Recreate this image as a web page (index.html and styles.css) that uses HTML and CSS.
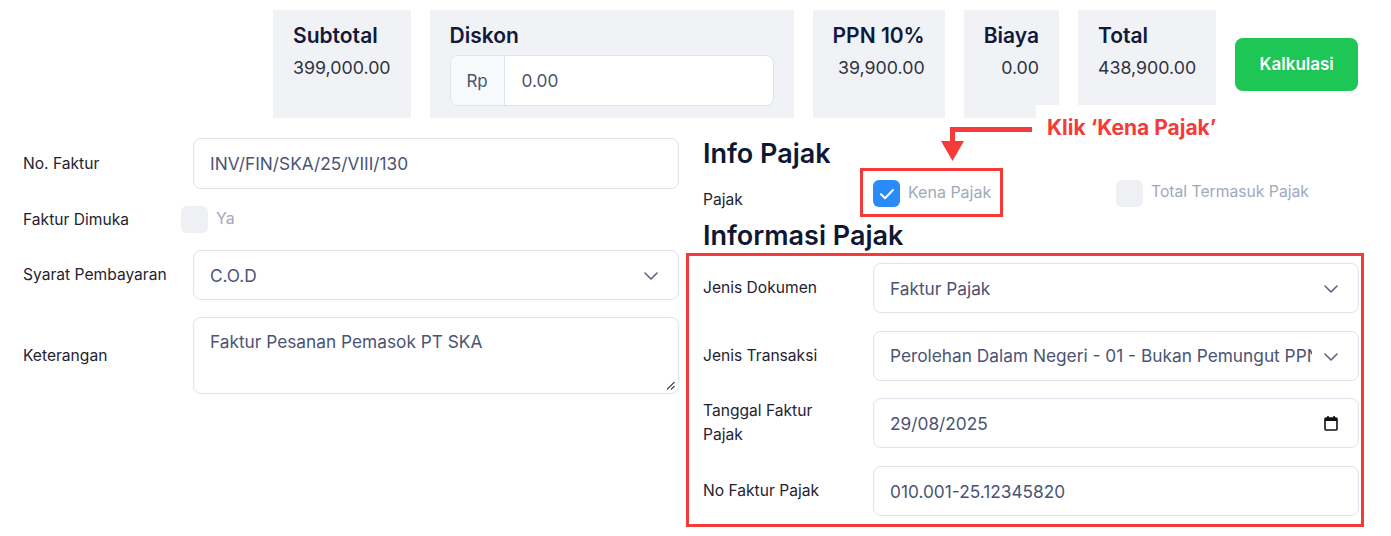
FILE: index.html
```html
<!DOCTYPE html>
<html lang="id">
<head>
<meta charset="utf-8">
<title>Faktur</title>
<link rel="stylesheet" href="styles.css">
</head>
<body>
<div class="page">
  <div class="summary">
    <div class="sbox">
      <div class="stitle">Subtotal</div>
      <div class="svalue">399,000.00</div>
    </div>
    <div class="sbox diskon">
      <div class="stitle">Diskon</div>
      <div class="igroup">
        <span class="addon">Rp</span>
        <span class="ivalue">0.00</span>
      </div>
    </div>
    <div class="sbox">
      <div class="stitle">PPN 10%</div>
      <div class="svalue">39,900.00</div>
    </div>
    <div class="sbox">
      <div class="stitle">Biaya</div>
      <div class="svalue">0.00</div>
    </div>
    <div class="sbox">
      <div class="stitle">Total</div>
      <div class="svalue">438,900.00</div>
    </div>
    <button class="btn-calc">Kalkulasi</button>
  </div>

  <div class="main">
    <div class="col">
      <div class="form">
        <div class="label">No. Faktur</div>
        <div class="field h51">INV/FIN/SKA/25/VIII/130</div>

        <div class="label">Faktur Dimuka</div>
        <div class="check-row shift">
          <span class="cbox"></span><span class="ctext">Ya</span>
        </div>

        <div class="label">Syarat Pembayaran</div>
        <div class="field select">
          <span class="ftext">C.O.D</span>
          <svg class="chev" width="14" height="8" viewBox="0 0 14 8"><path d="M1 1l6 6 6-6" fill="none" stroke="#5b6480" stroke-width="1.6" stroke-linecap="round" stroke-linejoin="round"/></svg>
        </div>

        <div class="label">Keterangan</div>
        <div class="field textarea">
          <span class="ftext">Faktur Pesanan Pemasok PT SKA</span>
          <svg class="grip" width="9" height="9" viewBox="0 0 9 9"><path d="M8.5 1L1 8.5M8.5 5L5 8.5" stroke="#444" stroke-width="1.1" fill="none"/></svg>
        </div>
      </div>
    </div>

    <div class="col">
      <h2 class="heading">Info Pajak</h2>
      <div class="pajak-row">
        <div class="label plabel">Pajak</div>
        <div class="pchecks">
          <div class="check-row">
            <span class="cbox checked"><svg width="16" height="12" viewBox="0 0 16 12"><path d="M2 6.3l4 4 8-8.3" fill="none" stroke="#fff" stroke-width="2" stroke-linecap="round" stroke-linejoin="round"/></svg></span>
            <span class="ctext">Kena Pajak</span>
          </div>
          <div class="check-row">
            <span class="cbox"></span><span class="ctext t2">Total Termasuk Pajak</span>
          </div>
        </div>
      </div>
      <h2 class="heading h2b">Informasi Pajak</h2>
      <div class="form tax">
        <div class="label">Jenis Dokumen</div>
        <div class="field select">
          <span class="ftext">Faktur Pajak</span>
          <svg class="chev" width="14" height="8" viewBox="0 0 14 8"><path d="M1 1l6 6 6-6" fill="none" stroke="#5b6480" stroke-width="1.6" stroke-linecap="round" stroke-linejoin="round"/></svg>
        </div>

        <div class="label">Jenis Transaksi</div>
        <div class="field select">
          <span class="ftext clip">Perolehan Dalam Negeri - 01 - Bukan Pemungut PPN</span>
          <svg class="chev" width="14" height="8" viewBox="0 0 14 8"><path d="M1 1l6 6 6-6" fill="none" stroke="#5b6480" stroke-width="1.6" stroke-linecap="round" stroke-linejoin="round"/></svg>
        </div>

        <div class="label narrow">Tanggal Faktur Pajak</div>
        <div class="field select">
          <span class="ftext">29/08/2025</span>
          <svg class="cal" width="14" height="16" viewBox="0 0 14 16"><rect x="1" y="3" width="12" height="12" rx="1" fill="none" stroke="#111" stroke-width="1.6"/><rect x="1" y="3" width="12" height="3" fill="#111"/><path d="M4 1v3M10 1v3" stroke="#111" stroke-width="1.6"/></svg>
        </div>

        <div class="label">No Faktur Pajak</div>
        <div class="field">010.001-25.12345820</div>
      </div>
    </div>
  </div>

  <div class="annot-label">Klik ‘Kena Pajak’</div>
  <svg class="annot-arrow" width="100" height="40" viewBox="0 0 100 40">
    <path d="M95 3.5H15.5V16" fill="none" stroke="#f53a3a" stroke-width="5"/>
    <path d="M4 15H27L15.5 35Z" fill="#f53a3a"/>
  </svg>
  <div class="annot-box box-kena"></div>
  <div class="annot-box box-info"></div>
</div>
</body>
</html>
```

FILE: styles.css
```css
* { box-sizing: border-box; }

html, body {
  margin: 0;
  padding: 0;
  background: #fff;
}

body {
  font-family: Inter, "Noto Sans", "Liberation Sans", sans-serif;
  color: #1f2330;
  width: 1391px;
  height: 536px;
  overflow: hidden;
}

.page {
  position: relative;
  width: 1391px;
  height: 536px;
}

/* summary row */
.summary {
  display: flex;
  align-items: stretch;
  padding: 10px 0 0 273px;
  gap: 19px;
  height: 118px;
}

.sbox {
  background: #f1f2f5;
  padding: 12px 20px 12px 20px;
  display: flex;
  flex-direction: column;
}

.stitle {
  font-size: 21px;
  line-height: 28px;
  font-weight: 600;
  color: #111a3a;
  margin-bottom: 5px;
}

.svalue {
  font-size: 17.8px;
  line-height: 26px;
  color: #2f3342;
  text-align: right;
}

.diskon {
  width: 364px;
}

.igroup {
  display: flex;
  height: 51px;
  border: 1px solid #dfe3ec;
  border-radius: 8px;
  background: #fff;
  overflow: hidden;
}

.addon {
  width: 54px;
  display: flex;
  align-items: center;
  justify-content: center;
  background: #f8f9fb;
  border-right: 1px solid #dfe3ec;
  font-size: 17px;
  color: #4a5474;
}

.ivalue {
  display: flex;
  align-items: center;
  padding-left: 17px;
  font-size: 17.3px;
  color: #4a5474;
}

.btn-calc {
  align-self: center;
  width: 123px;
  height: 53px;
  border: none;
  border-radius: 8px;
  background: #1ec656;
  color: #fff;
  font-family: Inter, "Noto Sans", sans-serif;
  font-size: 17px;
  font-weight: 600;
}

/* main */
.main {
  display: grid;
  grid-template-columns: 656px 656px;
  column-gap: 24px;
  padding: 20px 0 0 23px;
}

.form {
  display: grid;
  grid-template-columns: 170px 1fr;
  row-gap: 17px;
  align-items: center;
}

.label {
  font-size: 15.6px;
  line-height: 24px;
  color: #1f2330;
}

.narrow {
  max-width: 145px;
}

.field {
  position: relative;
  height: 50px;
  border: 1px solid #dfe3ec;
  border-radius: 8px;
  background: #fff;
  padding: 0 16px;
  display: flex;
  align-items: center;
  font-size: 17.3px;
  color: #4a5474;
  overflow: hidden;
  white-space: nowrap;
}

.h51 { height: 51px; }

.select { padding-right: 46px; }

.ftext.clip {
  overflow: hidden;
  display: block;
  width: 100%;
}

.chev {
  position: absolute;
  right: 20px;
  top: 21px;
}

.cal {
  position: absolute;
  right: 20px;
  top: 16px;
}

.textarea {
  height: 77px;
  align-items: flex-start;
  padding-top: 13px;
}

.grip {
  position: absolute;
  right: 3px;
  bottom: 3px;
}

.check-row {
  display: flex;
  align-items: center;
  height: 27px;
}

.shift { margin-left: -12px; }

.cbox {
  width: 27px;
  height: 27px;
  border-radius: 6px;
  background: #eff0f3;
  flex: none;
  display: flex;
  align-items: center;
  justify-content: center;
}

.cbox.checked {
  background: #2a8af6;
}

.ctext {
  margin-left: 8px;
  font-size: 16px;
  line-height: 22px;
  margin-top: -3px;
  color: #a1a8bd;
}

.ctext.t2 {
  font-size: 15.7px;
}

.heading {
  margin: 0;
  font-size: 27px;
  line-height: 32px;
  font-weight: 600;
  color: #0f1733;
}

.pajak-row {
  display: grid;
  grid-template-columns: 170px 1fr;
  height: 50px;
  align-items: start;
}

.plabel {
  padding-top: 18px;
}

.pchecks {
  display: grid;
  grid-template-columns: 1fr 1fr;
  padding-top: 10px;
}

.h2b {
  margin-bottom: 11px;
}

.tax {
  row-gap: 17.7px;
}

/* annotations */
.annot-label {
  position: absolute;
  left: 1036px;
  top: 105px;
  background: #fff;
  padding: 10px 14px 8px 11px;
  font-size: 21px;
  line-height: 26px;
  font-weight: 700;
  color: #f53a3a;
}

.annot-arrow {
  position: absolute;
  left: 937px;
  top: 126px;
}

.annot-box {
  position: absolute;
  border: 3px solid #f53a3a;
}

.box-kena {
  left: 860px;
  top: 168px;
  width: 143px;
  height: 49px;
}

.box-info {
  left: 686px;
  top: 253px;
  width: 678px;
  height: 274px;
}
```
